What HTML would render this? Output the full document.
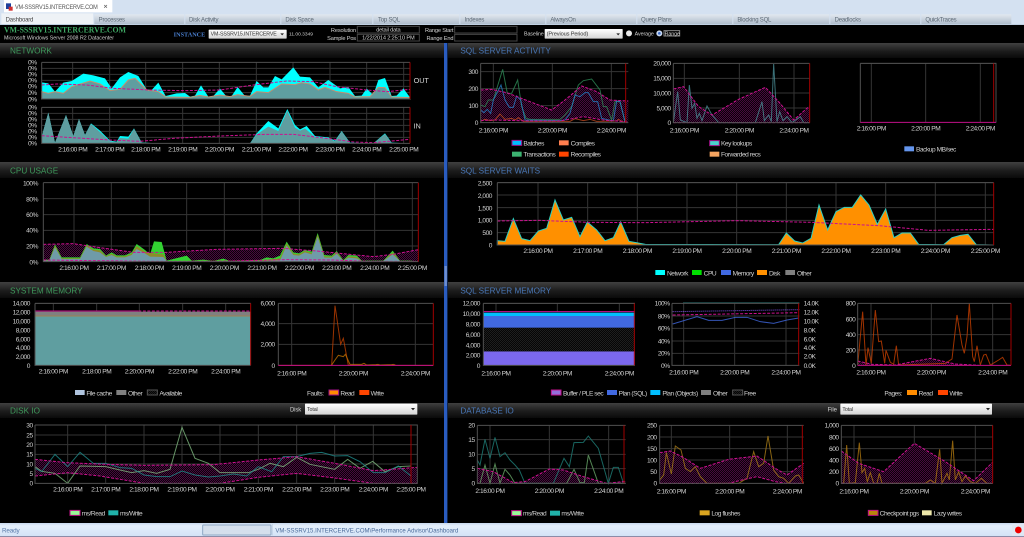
<!DOCTYPE html>
<html><head><meta charset="utf-8"><title>Performance Advisor Dashboard</title>
<style>
html,body{margin:0;padding:0;background:#000;width:1024px;height:537px;overflow:hidden}
svg{display:block;filter:blur(.35px)}
svg *{vector-effect:non-scaling-stroke}
text{font-family:"Liberation Sans",sans-serif;font-size:19.8px;letter-spacing:-1.35px;fill:#d2d2d2}
.e{text-anchor:end}.m{text-anchor:middle}
.title{font-size:24.6px;letter-spacing:0}
.gr{fill:#3f9a5c}.bl{fill:#4a78b8}
.tab{font-size:18px;letter-spacing:-.6px;fill:#5c6874}
.dk{fill:#333;font-size:16px;letter-spacing:-.4px}
.g{stroke:#343434;stroke-width:1;fill:none}
.f{stroke:#505050;stroke-width:1;fill:none}
.r{stroke:#a00000;stroke-width:1;fill:none}
.d{stroke:#cc1090;stroke-width:1;stroke-dasharray:3 1.5;fill:none}
.band{fill:url(#h);stroke:none}
.l{fill:none;stroke-width:1;opacity:.8}
</style></head><body>
<svg width="1024" height="537" viewBox="0 0 1024 537" xmlns="http://www.w3.org/2000/svg">
<defs>
<pattern id="h" width="6" height="6" patternUnits="userSpaceOnUse"><rect width="6" height="6" fill="#0a0108"/><rect width="3" height="3" fill="#480a3e"/><rect x="3" y="3" width="3" height="3" fill="#480a3e"/></pattern>
<pattern id="k" width="6" height="6" patternUnits="userSpaceOnUse"><rect width="6" height="6" fill="#050505"/><rect width="3" height="3" fill="#1e1e1e"/><rect x="3" y="3" width="3" height="3" fill="#1e1e1e"/></pattern>
<linearGradient id="hd" x1="0" y1="0" x2="0" y2="1"><stop offset="0" stop-color="#404040"/><stop offset=".55" stop-color="#1c1c1c"/><stop offset="1" stop-color="#0a0a0a"/></linearGradient>
<linearGradient id="tb" x1="0" y1="0" x2="0" y2="1"><stop offset="0" stop-color="#e2e8ef"/><stop offset="1" stop-color="#aebccb"/></linearGradient>
<linearGradient id="sel" x1="0" y1="0" x2="0" y2="1"><stop offset="0" stop-color="#fff"/><stop offset="1" stop-color="#d4d4d4"/></linearGradient>
<linearGradient id="st" x1="0" y1="0" x2="0" y2="1"><stop offset="0" stop-color="#c8d8ec"/><stop offset=".2" stop-color="#e4effb"/><stop offset="1" stop-color="#d2e2f6"/></linearGradient>
</defs>

<rect width="1024" height="537" fill="#000"/>
<rect width="1024" height="25" fill="#d4e1f1"/>
<rect x="0" y="523" width="1024" height="14" fill="url(#st)"/>
<rect x="0" y="536" width="1024" height="1" fill="#8c8ca8"/>

<!-- section headers -->
<rect x="0" y="43" width="444" height="15" fill="url(#hd)"/>
<rect x="448" y="43" width="576" height="15" fill="url(#hd)"/>
<rect x="0" y="162" width="444" height="16" fill="url(#hd)"/>
<rect x="448" y="162" width="576" height="16" fill="url(#hd)"/>
<rect x="0" y="282" width="444" height="16" fill="url(#hd)"/>
<rect x="448" y="282" width="576" height="16" fill="url(#hd)"/>
<rect x="0" y="403" width="444" height="15" fill="url(#hd)"/>
<rect x="448" y="403" width="576" height="15" fill="url(#hd)"/>
<rect x="444" y="43" width="3.4" height="480" fill="#2a5cc0"/>
<rect x="444.5" y="266" width="2.4" height="20" fill="#6f8fd0"/>

<!-- ZOOM 1 -->
<g transform="scale(.33333)">
<rect x="12" y="0" width="325" height="37" fill="#fff"/>
<rect x="18" y="10" width="15" height="17" fill="#1c3f9c"/><rect x="26" y="20" width="12" height="12" fill="#d03030"/>
<text x="45" y="27" class="tab" textLength="248" lengthAdjust="spacingAndGlyphs" style="fill:#555">VM-SSSRV15.INTERCERVE.COM</text>
<text x="311" y="26" style="font-size:20px;fill:#666;font-weight:bold">×</text>
<rect x="4" y="40" width="276" height="33" fill="#eef2f6"/>
<rect x="283" y="43" width="270" height="30" fill="url(#tb)"/>
<rect x="556" y="43" width="285" height="30" fill="url(#tb)"/>
<rect x="844" y="43" width="273" height="30" fill="url(#tb)"/>
<rect x="1120" y="43" width="258" height="30" fill="url(#tb)"/>
<rect x="1381" y="43" width="255" height="30" fill="url(#tb)"/>
<rect x="1639" y="43" width="270" height="30" fill="url(#tb)"/>
<rect x="1912" y="43" width="285" height="30" fill="url(#tb)"/>
<rect x="2200" y="43" width="288" height="30" fill="url(#tb)"/>
<rect x="2491" y="43" width="270" height="30" fill="url(#tb)"/>
<rect x="2764" y="43" width="270" height="30" fill="url(#tb)"/>
<rect x="0" y="72" width="3072" height="3" fill="#c0d0e2"/>
<text x="17" y="64" class="tab" style="fill:#444">Dashboard</text>
<text x="296" y="65" class="tab">Processes</text>
<text x="567" y="65" class="tab">Disk Activity</text>
<text x="856" y="65" class="tab">Disk Space</text>
<text x="1134" y="65" class="tab">Top SQL</text>
<text x="1394" y="65" class="tab">Indexes</text>
<text x="1651" y="65" class="tab">AlwaysOn</text>
<text x="1923" y="65" class="tab">Query Plans</text>
<text x="2212" y="65" class="tab">Blocking SQL</text>
<text x="2504" y="65" class="tab">Deadlocks</text>
<text x="2776" y="65" class="tab">QuickTraces</text>

<text x="12" y="97" textLength="366" lengthAdjust="spacingAndGlyphs" style="font-family:'Liberation Serif',serif;font-weight:bold;font-size:25px;letter-spacing:0;fill:#3fa864">VM-SSSRV15.INTERCERVE.COM</text>
<text x="12" y="119" textLength="330" lengthAdjust="spacingAndGlyphs" style="font-size:17px;letter-spacing:0">Microsoft Windows Server 2008 R2 Datacenter</text>
<text x="521" y="110" textLength="95" lengthAdjust="spacingAndGlyphs" style="font-family:'Liberation Serif',serif;font-weight:bold;font-size:20px;letter-spacing:0;fill:#4a7fcf">INSTANCE</text>
<rect x="626" y="89" width="234" height="27" rx="2" fill="url(#sel)"/>
<text x="632" y="107" class="dk" textLength="198" lengthAdjust="spacingAndGlyphs">VM-SSSRV15.INTERCERVE</text>
<path d="M841 100h11l-5.500 6z" fill="#222"/>
<text x="867" y="107" textLength="72" lengthAdjust="spacingAndGlyphs" style="font-size:15px;letter-spacing:0">11.00.3349</text>
<text x="1068" y="96" class="e" style="font-size:17px;letter-spacing:-.5px">Resolution</text>
<text x="1068" y="120" class="e" style="font-size:17px;letter-spacing:-.5px">Sample Pos</text>
<rect x="1072" y="79" width="186" height="20" fill="none" stroke="#444"/>
<rect x="1072" y="103" width="186" height="20" fill="none" stroke="#444"/>
<text x="1165" y="95" class="m" style="font-size:17px;letter-spacing:-.5px">detail data</text>
<text x="1165" y="119" class="m" style="font-size:17px;letter-spacing:-.5px">1/22/2014 2:25:10 PM</text>
<text x="1360" y="96" class="e" style="font-size:17px;letter-spacing:-.5px">Range Start</text>
<text x="1360" y="120" class="e" style="font-size:17px;letter-spacing:-.5px">Range End</text>
<rect x="1364" y="79" width="187" height="20" fill="none" stroke="#444"/>
<rect x="1364" y="103" width="187" height="20" fill="none" stroke="#444"/>

<text x="30" y="161" class="title gr">NETWORK</text>
<text x="30" y="521" class="title gr">CPU USAGE</text>
<text x="30" y="881" class="title gr">SYSTEM MEMORY</text>
<text x="30" y="1241" class="title gr">DISK IO</text>
<text x="1381" y="161" class="title bl">SQL SERVER ACTIVITY</text>
<text x="1381" y="521" class="title bl">SQL SERVER WAITS</text>
<text x="1381" y="881" class="title bl">SQL SERVER MEMORY</text>
<text x="1381" y="1241" class="title bl">DATABASE IO</text>

<!-- Network OUT -->
<path class="g" d="M125 205H1230M125 223H1230M125 241H1230M125 259H1230M125 278H1230M218 187V297M329 187V297M437 187V297M548 187V297M658 187V297M769 187V297M879 187V297M990 187V297M1100 187V297M1211 187V297"/>
<path fill="#00ffff" d="M125 297V247L145 250 165 275 190 248 215 243 250 221 280 226 315 235 335 265 360 232 385 216 415 228 440 268 455 270 475 248 497 288 530 280 555 279 570 290 585 287 603 256 625 290 640 288 660 266 680 290 695 288 713 261 735 288 750 287 770 243 790 262 805 262 825 228 845 238 880 202 900 230 930 232 955 262 985 240 1020 265 1045 261 1065 288 1085 287 1100 266 1120 285 1135 240 1155 234 1175 288 1190 287 1210 265 1230 292V297Z"/>
<path fill="#5f9ea0" stroke="#c09070" d="M125 297V275L145 280 165 275 190 280 215 260 270 243 300 252 330 272 360 268 385 240 405 235 440 270 475 275 497 291 570 292 600 286 625 291 660 285 690 290 713 284 750 289 770 275 805 278 845 252 885 254 905 248 930 252 955 270 975 262 1010 275 1045 280 1065 291 1110 290 1135 262 1155 263 1175 291 1230 293V297Z"/>
<path class="d" d="M125 255 170 252 260 255 340 265 450 270 550 272 660 270 760 255 860 243 940 245 1010 260 1100 270 1160 275 1230 268"/>
<path class="f" d="M125 187H1230M125 187V297H1230"/><path class="r" d="M1230 187V297"/>
<g class="e">
<text x="110" y="194" class="e">0%</text><text x="110" y="212" class="e">0%</text><text x="110" y="230" class="e">0%</text><text x="110" y="248" class="e">0%</text><text x="110" y="266" class="e">0%</text><text x="110" y="285" class="e">0%</text><text x="110" y="304" class="e">0%</text>
<text x="110" y="329" class="e">0%</text><text x="110" y="347" class="e">0%</text><text x="110" y="365" class="e">0%</text><text x="110" y="383" class="e">0%</text><text x="110" y="401" class="e">0%</text><text x="110" y="419" class="e">0%</text><text x="110" y="437" class="e">0%</text>
</g>
<text x="1241" y="249" style="font-size:22px;letter-spacing:-.5px">OUT</text>
<text x="1241" y="385" style="font-size:22px;letter-spacing:-.5px">IN</text>

<!-- Network IN -->
<path class="g" d="M125 340H1230M125 358H1230M125 376H1230M125 394H1230M125 412H1230M218 322V430M329 322V430M437 322V430M548 322V430M658 322V430M769 322V430M879 322V430M990 322V430M1100 322V430M1211 322V430"/>
<path fill="#00ffff" d="M125 430V410L145 338 165 428 198 345 220 408 237 357 255 405 273 370 300 392 330 422 350 425 360 408 385 410 402 385 425 427 470 430 750 430 770 400 805 363 835 385 862 327 885 375 900 388 920 378 945 408 985 412 1005 422 1025 393 1050 428 1120 430 1155 400 1175 428 1230 430Z"/>
<path fill="#5f9ea0" d="M125 430V410L145 338 165 428 198 345 220 408 237 357 255 405 273 372 300 396 330 424 350 426 360 414 385 416 402 386 425 428 470 430 750 430 770 403 805 380 835 393 862 332 885 383 900 392 915 385 945 411 985 414 1005 424 1025 394 1050 429 1120 430 1155 402 1175 429 1230 430Z"/>
<path class="d" d="M125 407 170 410 250 415 330 420 420 424 520 415 660 408 800 403 880 403 980 415 1060 426 1120 428 1230 418"/>
<path class="f" d="M125 322H1230M125 322V430H1230"/><path class="r" d="M1230 322V430"/>
<text x="218" y="454" class="m">2:16:00 PM</text><text x="329" y="454" class="m">2:17:00 PM</text><text x="437" y="454" class="m">2:18:00 PM</text><text x="548" y="454" class="m">2:19:00 PM</text><text x="658" y="454" class="m">2:20:00 PM</text><text x="769" y="454" class="m">2:21:00 PM</text><text x="879" y="454" class="m">2:22:00 PM</text><text x="990" y="454" class="m">2:23:00 PM</text><text x="1100" y="454" class="m">2:24:00 PM</text><text x="1211" y="454" class="m">2:25:00 PM</text>
</g>

<!-- ZOOM 2: top right -->
<g transform="translate(512,0) scale(.33333)">
<text x="36" y="106" style="font-size:16px;letter-spacing:-.3px">Baseline</text>
<rect x="98" y="87" width="234" height="29" rx="2" fill="url(#sel)"/>
<text x="104" y="107" class="dk" style="font-size:17px">(Previous Period)</text>
<path d="M313 100h11l-5.500 6z" fill="#222"/>
<circle cx="351" cy="100" r="9" fill="#e8e8e8"/>
<text x="368" y="106" style="font-size:16px;letter-spacing:-.3px">Average</text>
<circle cx="442" cy="100" r="9" fill="#c8d8f0"/><circle cx="442" cy="100" r="4" fill="#3a6ac8"/>
<rect x="456" y="92" width="47" height="16" fill="none" stroke="#888"/>
<text x="458" y="106" style="font-size:16px;letter-spacing:-.3px">Range</text>

<!-- Chart 2 activity -->
<path class="g" d="M484 235H893M484 279H893M484 324H893M517 190V368M682 190V368M846 190V368"/>
<path class="band" d="M484 267 515 260 560 320 600 345 680 298 760 262 800 305 845 360 893 318V368H484Z"/>
<path class="l" stroke="#4a8e96" d="M484 368 497 275 505 360 525 368 532 255 540 325 548 310 555 355 562 340 570 362 585 318 600 345 620 368 730 368 750 305 757 362 770 345 778 365 785 192 795 365 803 335 813 362 825 350 840 368 865 350 875 368 893 368"/>
<path class="d" d="M484 267 515 260 560 320 600 345 680 298 760 262 800 305 845 360 893 318"/>
<path class="d" d="M484 368H893"/>
<path class="f" d="M484 190H893M484 190V368H893"/><path class="r" d="M893 190V368"/>
<text x="476" y="197" class="e">20,000</text><text x="476" y="242" class="e">15,000</text><text x="476" y="286" class="e">10,000</text><text x="476" y="331" class="e">5,000</text><text x="476" y="375" class="e">0</text>
<text x="517" y="398" class="m">2:16:00 PM</text><text x="682" y="398" class="m">2:20:00 PM</text><text x="846" y="398" class="m">2:24:00 PM</text>
<rect x="593" y="422" width="29" height="15" fill="#48d1cc" stroke="#a01088"/><text x="627" y="437">Key lookups</text>
<rect x="593" y="455" width="29" height="15" fill="#f4a460"/><text x="627" y="470">Forwarded recs</text>

<!-- Chart 3 activity -->
<path class="g" d="M1045 190H1452M1078 190V368M1241 190V368M1405 190V368"/>
<path class="f" d="M1045 190H1452V368M1045 190V368"/>
<path class="r" d="M1445 190V368"/>
<path stroke="#c01088" fill="none" d="M1045 367H1452"/>
<text x="1078" y="392" class="m">2:16:00 PM</text><text x="1241" y="392" class="m">2:20:00 PM</text><text x="1405" y="392" class="m">2:24:00 PM</text>
<rect x="1177" y="439" width="29" height="15" fill="#6495ed"/><text x="1212" y="454">Backup MB/sec</text>
</g>

<!-- Activity chart 1 -->
<g transform="translate(450,50) scale(.33333)">
<path class="g" d="M92 65H535M92 116H535M92 167H535M130 40V218M307 40V218M484 40V218"/>
<path class="band" d="M92 120 125 118 170 128 240 155 305 180 345 150 395 108 440 125 480 150 535 153V216L460 210 400 200 330 213 240 213 130 210 92 212Z"/>
<path class="l" stroke="#2e8b57" d="M92 165 105 170 115 150 130 150 158 58 172 130 185 130 203 90 215 170 228 205 240 208 330 208 345 195 365 170 385 105 400 92 425 87 450 120 460 170 470 170 485 210 495 155 510 155 525 215"/>
<path class="l" stroke="#2480c8" d="M92 180 102 188 112 178 122 190 130 150 153 105 165 150 178 172 190 172 200 138 212 150 225 210 330 212 345 210 360 190 375 135 390 140 405 128 415 128 430 155 443 155 455 205 490 213 500 153 510 155 525 215"/>
<path class="l" stroke="#c04a20" d="M92 214 105 208 120 212 135 210 150 192 165 208 185 205 195 210 205 203 220 214 360 214 375 206 400 212 420 208 440 214 500 213 505 208 520 216"/>
<path class="d" d="M92 120 125 118 170 128 240 155 305 180 345 150 395 108 440 125 480 150 535 153"/>
<path class="d" d="M92 212 130 210 240 213 330 213 400 200 460 210 535 216"/>
<path class="f" d="M92 40H535M92 40V218H535"/><path class="r" d="M527 40V218"/>
<text x="84" y="72" class="e">300</text><text x="84" y="123" class="e">200</text><text x="84" y="174" class="e">100</text><text x="84" y="225" class="e">0</text>
<text x="130" y="248" class="m">2:16:00 PM</text><text x="307" y="248" class="m">2:20:00 PM</text><text x="484" y="248" class="m">2:24:00 PM</text>
<rect x="186" y="271" width="29" height="15" fill="#00bfff" stroke="#a01088"/><text x="220" y="287">Batches</text>
<rect x="327" y="271" width="29" height="15" fill="#ff7f50"/><text x="362" y="287">Compiles</text>
<rect x="186" y="305" width="29" height="15" fill="#3cb371"/><text x="220" y="319">Transactions</text>
<rect x="327" y="305" width="29" height="15" fill="#ff4500"/><text x="362" y="319">Recompiles</text>
</g>

<!-- CPU -->
<g transform="translate(0,165) scale(.33333)">
<path class="g" d="M130 101H1255M130 149H1255M130 196H1255M130 243H1255M222 53V290M334 53V290M448 53V290M560 53V290M673 53V290M786 53V290M898 53V290M1010 53V290M1124 53V290M1237 53V290"/>
<path class="band" d="M130 238 220 236 300 248 400 262 500 262 650 253 850 250 950 258 1050 268 1120 275 1180 268 1255 254V290H130Z"/>
<path fill="#32d232" d="M130 290V284L148 284 165 238 185 277 240 277 260 237 280 250 300 252 318 272 335 262 350 271 375 271 395 262 410 237 435 255 450 268 462 229 485 231 500 287 520 282 560 272 575 287 610 284 640 288 670 281 690 288 780 285 800 277 820 280 840 272 860 230 880 262 897 265 915 255 935 260 953 204 973 270 995 272 1010 258 1030 285 1045 270 1070 272 1085 287 1150 287 1178 257 1200 287 1230 287 1255 289V290Z"/>
<path fill="#8c8c28" d="M130 290V286L148 286 165 242 185 280 240 280 260 241 280 254 300 256 318 274 335 266 350 274 375 274 395 266 410 243 435 260 450 264 490 268 500 288 780 287 840 280 860 235 880 266 897 268 915 258 935 264 953 209 973 274 995 275 1010 262 1030 287 1045 274 1070 276 1085 288 1150 288 1178 262 1200 288 1255 290Z"/>
<path fill="#6f9ba8" d="M130 290V287L148 287 165 247 185 282 240 282 260 245 280 258 300 262 318 276 335 270 350 277 375 277 395 270 410 252 435 265 450 275 490 276 500 288 780 288 840 286 860 242 880 270 897 272 915 262 935 268 953 216 973 278 995 278 1010 266 1030 288 1045 278 1070 280 1085 288 1150 288 1178 268 1200 288 1255 290Z"/>
<path class="d" d="M130 238 220 236 300 248 400 262 500 262 650 253 850 250 950 258 1050 268 1120 275 1180 268 1255 254"/>
<path class="d" d="M130 285 450 289 650 289 860 284 1000 285 1100 289 1255 289"/>
<path class="f" d="M130 53H1255M130 53V290H1255"/><path class="r" d="M1255 53V290"/>
<text x="114" y="62" class="e">100%</text><text x="114" y="109" class="e">80%</text><text x="114" y="156" class="e">60%</text><text x="114" y="203" class="e">40%</text><text x="114" y="250" class="e">20%</text><text x="114" y="298" class="e">0%</text>
<text x="222" y="315" class="m">2:16:00 PM</text><text x="334" y="315" class="m">2:17:00 PM</text><text x="448" y="315" class="m">2:18:00 PM</text><text x="560" y="315" class="m">2:19:00 PM</text><text x="673" y="315" class="m">2:20:00 PM</text><text x="786" y="315" class="m">2:21:00 PM</text><text x="898" y="315" class="m">2:22:00 PM</text><text x="1010" y="315" class="m">2:23:00 PM</text><text x="1124" y="315" class="m">2:24:00 PM</text><text x="1237" y="315" class="m">2:25:00 PM</text>
</g>

<!-- WAITS -->
<g transform="translate(512,165) scale(.33333)">
<path class="g" d="M-44 53H1445M-44 90H1445M-44 128H1445M-44 166H1445M-44 203H1445M78 53V240M227 53V240M376 53V240M525 53V240M674 53V240M823 53V240M972 53V240M1121 53V240M1270 53V240M1420 53V240"/>
<path fill="#ff9000" stroke="#30d0c0" d="M-44 240V227L-21 229 4 161 29 221 54 227 79 198 104 190 129 105 154 165 179 157 204 215 226 171 254 195 279 227 304 218 326 171 351 229 400 238 800 239 823 204 848 228 872 234 897 220 921 120 947 195 972 140 997 127 1021 127 1046 90 1071 120 1096 178 1121 132 1146 218 1170 204 1195 204 1220 238 1295 239 1320 218 1345 211 1368 208 1393 239 1445 240Z"/>
<path class="d" d="M-44 168 80 166 230 172 400 173 675 167 900 172 1100 182 1250 196 1445 193"/>
<path class="f" d="M-44 53H1445M-44 53V240H1445"/><path class="r" d="M1445 53V240"/>
<text x="-60" y="62" class="e">2,500</text><text x="-60" y="99" class="e">2,000</text><text x="-60" y="136" class="e">1,500</text><text x="-60" y="173" class="e">1,000</text><text x="-60" y="210" class="e">500</text><text x="-60" y="248" class="e">0</text>
<text x="78" y="264" class="m">2:16:00 PM</text><text x="227" y="264" class="m">2:17:00 PM</text><text x="376" y="264" class="m">2:18:00 PM</text><text x="525" y="264" class="m">2:19:00 PM</text><text x="674" y="264" class="m">2:20:00 PM</text><text x="823" y="264" class="m">2:21:00 PM</text><text x="972" y="264" class="m">2:22:00 PM</text><text x="1121" y="264" class="m">2:23:00 PM</text><text x="1270" y="264" class="m">2:24:00 PM</text><text x="1420" y="264" class="m">2:25:00 PM</text>
<rect x="430" y="315" width="29" height="15" fill="#00ffff"/><text x="465" y="331">Network</text>
<rect x="540" y="315" width="29" height="15" fill="#00e000"/><text x="575" y="331">CPU</text>
<rect x="627" y="315" width="30" height="15" fill="#4169e1"/><text x="662" y="331">Memory</text>
<rect x="735" y="315" width="30" height="15" fill="#ff9000"/><text x="771" y="331">Disk</text>
<rect x="820" y="315" width="29" height="15" fill="#808080"/><text x="855" y="331">Other</text>
</g>

<!-- SYSTEM MEMORY -->
<g transform="translate(0,285) scale(.33333)">
<path class="g" d="M105 55H752M160 55V78M290 55V78M418 55V78M548 55V78M677 55V78"/>
<rect x="105" y="80" width="647" height="13" fill="#808080"/>
<rect x="105" y="93" width="647" height="148" fill="#5f9ea0"/>
<path stroke="#a08050" fill="none" d="M105 93H752"/>
<path stroke="#cc1090" fill="none" d="M105 78H415"/>
<path class="d" d="M415 78H752"/>
<path class="f" d="M105 55H752M105 55V241H752"/><path class="r" d="M752 55V241"/>
<text x="90" y="62" class="e">14,000</text><text x="90" y="89" class="e">12,000</text><text x="90" y="115" class="e">10,000</text><text x="90" y="142" class="e">8,000</text><text x="90" y="169" class="e">6,000</text><text x="90" y="195" class="e">4,000</text><text x="90" y="222" class="e">2,000</text><text x="90" y="249" class="e">0</text>
<text x="160" y="266" class="m">2:16:00 PM</text><text x="290" y="266" class="m">2:18:00 PM</text><text x="418" y="266" class="m">2:20:00 PM</text><text x="548" y="266" class="m">2:22:00 PM</text><text x="677" y="266" class="m">2:24:00 PM</text>
<rect x="225" y="315" width="29" height="15" fill="#b0c4de"/><text x="259" y="331">File cache</text>
<rect x="349" y="315" width="30" height="15" fill="#808080"/><text x="384" y="331">Other</text>
<rect x="442" y="315" width="30" height="15" fill="url(#k)" stroke="#555"/><text x="478" y="331">Available</text>

<path class="g" d="M835 116H1300M835 178H1300M875 55V241M1060 55V241M1246 55V241"/>
<path class="l" stroke="#c04000" d="M835 241H995L1005 62 1022 178 1030 160 1045 241H1300"/>
<path class="l" stroke="#c07000" d="M995 240 1005 225 1015 211 1030 215 1036 208 1050 238 1085 238 1092 235 1100 240 1128 239 1134 238 1140 240 1175 239 1180 238 1186 240"/>
<path class="f" d="M835 55H1300M835 55V241"/>
<path stroke="#c01088" fill="none" d="M835 241H1300"/>
<path class="r" d="M1300 55V241"/>
<text x="824" y="62" class="e">6,000</text><text x="824" y="123" class="e">4,000</text><text x="824" y="185" class="e">2,000</text><text x="824" y="249" class="e">0</text>
<text x="875" y="272" class="m">2:16:00 PM</text><text x="1060" y="272" class="m">2:20:00 PM</text><text x="1246" y="272" class="m">2:24:00 PM</text>
<text x="921" y="331">Faults:</text>
<rect x="987" y="315" width="29" height="15" fill="#ff8c00" stroke="#a01088"/><text x="1021" y="331">Read</text>
<rect x="1078" y="315" width="30" height="15" fill="#ff4500"/><text x="1112" y="331">Write</text>
</g>

<!-- SQL MEMORY -->
<g transform="translate(450,290) scale(.33333)">
<path class="g" d="M100 40H555M138 40V65M322 40V65M508 40V65"/>
<rect x="100" y="184" width="455" height="42" fill="#7b68ee"/>
<rect x="100" y="113" width="455" height="71" fill="url(#k)"/>
<rect x="100" y="78" width="455" height="35" fill="#4169e1"/>
<rect x="100" y="68" width="455" height="10" fill="#00bfff"/>
<path stroke="#cc1090" fill="none" d="M100 65H555"/>
<path class="f" d="M100 40H555M100 40V226H555"/><path class="r" d="M553 40V226"/>
<text x="90" y="47" class="e">12,000</text><text x="90" y="78" class="e">10,000</text><text x="90" y="109" class="e">8,000</text><text x="90" y="141" class="e">6,000</text><text x="90" y="172" class="e">4,000</text><text x="90" y="203" class="e">2,000</text><text x="90" y="234" class="e">0</text>
<text x="138" y="256" class="m">2:16:00 PM</text><text x="322" y="256" class="m">2:20:00 PM</text><text x="508" y="256" class="m">2:24:00 PM</text>
</g>
<g transform="translate(512,285) scale(.33333)">
<path class="g" d="M480 93H862M480 130H862M480 168H862M480 205H862M515 55V241M668 55V241M822 55V241"/>
<path stroke="#2a8a8a" fill="none" stroke-width="1" d="M513 54H862"/>
<path class="l" stroke="#4169e1" d="M482 117 555 95 590 106 630 106 670 97 705 97 745 110 785 115 825 105 860 99"/>
<path stroke="#7b50e0" fill="none" stroke-dasharray="1 1" d="M482 80 862 74"/>
<path class="d" d="M482 90 860 83"/>
<path class="f" d="M480 55H862M480 55V241H862"/><path class="r" d="M860 55V241"/>
<text x="473" y="62" class="e">100%</text><text x="473" y="100" class="e">80%</text><text x="473" y="137" class="e">60%</text><text x="473" y="175" class="e">40%</text><text x="473" y="212" class="e">20%</text><text x="473" y="249" class="e">0%</text>
<text x="875" y="62">14.0K</text><text x="875" y="89">12.0K</text><text x="875" y="115">10.0K</text><text x="875" y="142">8.0K</text><text x="875" y="169">6.0K</text><text x="875" y="195">4.0K</text><text x="875" y="221">2.0K</text><text x="875" y="249">0.0K</text>
<text x="515" y="269" class="m">2:16:00 PM</text><text x="668" y="269" class="m">2:20:00 PM</text><text x="822" y="269" class="m">2:24:00 PM</text>

<path class="g" d="M1037 102H1497M1037 149H1497M1037 195H1497M1077 55V241M1258 55V241M1442 55V241"/>
<path class="band" d="M1037 228 1080 238 1150 240 1255 220 1330 237 1400 241H1037Z"/>
<path class="l" stroke="#c84000" d="M1037 241 1052 80 1062 241 1068 188 1078 235 1090 75 1100 170 1108 168 1118 235 1122 196 1135 232 1145 238 1153 182 1160 240 1300 235 1320 222 1335 90 1350 180 1357 205 1365 155 1372 55 1382 215 1387 230 1395 182 1405 240 1415 210 1422 208 1435 240 1460 225 1472 217 1485 240 1497 241"/>
<path class="d" d="M1037 228 1080 238 1150 240 1255 220 1330 237 1400 241"/>
<path class="f" d="M1037 55H1497M1037 55V241"/><path stroke="#c01088" fill="none" d="M1037 241H1497"/><path class="r" d="M1497 55V241"/>
<text x="1030" y="62" class="e">800</text><text x="1030" y="109" class="e">600</text><text x="1030" y="156" class="e">400</text><text x="1030" y="202" class="e">200</text><text x="1030" y="249" class="e">0</text>
<text x="1077" y="269" class="m">2:16:00 PM</text><text x="1258" y="269" class="m">2:20:00 PM</text><text x="1442" y="269" class="m">2:24:00 PM</text>

<rect x="118" y="315" width="29" height="15" fill="#9370db" stroke="#c01088"/><text x="153" y="331">Buffer / PLE sec</text>
<rect x="285" y="315" width="30" height="15" fill="#4169e1"/><text x="320" y="331">Plan (SQL)</text>
<rect x="415" y="315" width="30" height="15" fill="#00bfff"/><text x="451" y="331">Plan (Objects)</text>
<rect x="567" y="315" width="30" height="15" fill="#808080"/><text x="603" y="331">Other</text>
<rect x="662" y="315" width="30" height="15" fill="url(#k)" stroke="#555"/><text x="696" y="331">Free</text>
<text x="1117" y="331">Pages:</text>
<rect x="1185" y="315" width="30" height="15" fill="#ff8c00"/><text x="1220" y="331">Read</text>
<rect x="1278" y="315" width="30" height="15" fill="#ff4500"/><text x="1312" y="331">Write</text>
</g>

<!-- DISK IO -->
<g transform="translate(0,400) scale(.33333)">
<text x="870" y="34" style="font-size:18px;letter-spacing:-.4px">Disk</text>
<rect x="915" y="11" width="337" height="33" rx="2" fill="url(#sel)"/>
<text x="921" y="33" class="dk">Total</text>
<path d="M1233 24h12l-6 7z" fill="#222"/>

<path class="g" d="M105 105H1252M105 134H1252M105 163H1252M105 192H1252M105 221H1252M203 75V250M317 75V250M432 75V250M546 75V250M660 75V250M775 75V250M890 75V250M1004 75V250M1120 75V250M1233 75V250"/>
<path class="band" d="M105 178 200 188 320 193 432 196 640 194 775 180 890 170 1004 190 1120 212 1252 202V250H1120L1004 234 890 220 775 232 660 250H432L300 228 203 218 105 228Z"/>
<path class="l" stroke="#7fb87f" d="M105 200 125 214 165 220 203 250 240 198 317 200 360 210 395 218 432 212 470 220 510 208 546 82 585 175 625 190 660 218 745 218 775 208 810 190 850 200 890 172 930 193 1004 208 1043 178 1080 205 1118 184 1155 215 1195 200 1233 198"/>
<path class="l" stroke="#1f8c8c" d="M105 205 125 215 165 163 203 200 240 157 280 190 317 190 360 203 395 205 432 225 470 230 510 230 546 213 585 225 625 231 660 228 700 222 740 228 775 200 815 215 850 170 890 170 930 160 965 157 1004 168 1043 167 1080 185 1120 218 1155 218 1195 198 1233 228"/>
<path class="d" d="M105 178 200 188 320 193 432 196 640 194 775 180 890 170 1004 190 1120 212 1252 202"/>
<path class="d" d="M105 228 203 218 300 228 432 250 660 250 775 232 890 220 1004 234 1120 250 1252 250"/>
<path class="f" d="M105 75H1252V250H105V75"/><path class="r" d="M1233 75V250"/>
<text x="98" y="83" class="e">30</text><text x="98" y="112" class="e">25</text><text x="98" y="141" class="e">20</text><text x="98" y="170" class="e">15</text><text x="98" y="199" class="e">10</text><text x="98" y="228" class="e">5</text><text x="98" y="257" class="e">0</text>
<text x="203" y="274" class="m">2:16:00 PM</text><text x="317" y="274" class="m">2:17:00 PM</text><text x="432" y="274" class="m">2:18:00 PM</text><text x="546" y="274" class="m">2:19:00 PM</text><text x="660" y="274" class="m">2:20:00 PM</text><text x="775" y="274" class="m">2:21:00 PM</text><text x="890" y="274" class="m">2:22:00 PM</text><text x="1004" y="274" class="m">2:23:00 PM</text><text x="1120" y="274" class="m">2:24:00 PM</text><text x="1233" y="274" class="m">2:25:00 PM</text>
<rect x="210" y="331" width="30" height="15" fill="#98fb98" stroke="#c01088"/><text x="245" y="346">ms/Read</text>
<rect x="325" y="331" width="30" height="15" fill="#20b2aa"/><text x="360" y="346">ms/Write</text>

<rect x="608" y="375" width="205" height="30" rx="2" fill="#d4dfec" stroke="#8fa8c4" stroke-width="1"/>
<rect x="818" y="372" width="1" height="34" fill="#a0b4cc"/>
<text x="6" y="398" style="font-size:19px;letter-spacing:-.5px;fill:#5878a8">Ready</text>
<text x="826" y="398" textLength="549" lengthAdjust="spacingAndGlyphs" style="font-size:19px;letter-spacing:0;fill:#4a6a9a">VM-SSSRV15.INTERCERVE.COM\Performance Advisor\Dashboard</text>
</g>

<!-- DB IO chart 1 -->
<g transform="translate(450,410) scale(.33333)">
<path class="g" d="M82 89H527M82 133H527M82 176H527M120 46V220M298 46V220M476 46V220"/>
<path class="band" d="M82 175 130 185 190 218 225 215 298 177 340 180 400 200 470 220 527 214V220H82Z"/>
<path class="l" stroke="#6aa86a" d="M82 220 90 220 105 165 120 220 135 162 150 220 165 178 180 195 195 220 350 220 372 178 390 218 403 218 415 135 445 220 527 220"/>
<path class="l" stroke="#1f7f78" d="M82 150 90 165 105 88 120 145 135 82 150 140 165 128 180 150 195 165 208 180 225 220 310 220 342 145 358 170 372 98 400 97 415 78 445 115 475 220 490 172 505 172 520 218"/>
<path class="d" d="M82 175 130 185 190 218 225 215 298 177 340 180 400 200 470 220 527 214"/>
<path class="f" d="M82 46H527M82 46V220H527"/><path class="r" d="M522 46V220"/>
<text x="74" y="53" class="e">20</text><text x="74" y="96" class="e">15</text><text x="74" y="140" class="e">10</text><text x="74" y="183" class="e">5</text><text x="74" y="227" class="e">0</text>
<text x="120" y="249" class="m">2:16:00 PM</text><text x="298" y="249" class="m">2:20:00 PM</text><text x="476" y="249" class="m">2:24:00 PM</text>
<rect x="185" y="302" width="29" height="15" fill="#98fb98" stroke="#c01088"/><text x="219" y="317">ms/Read</text>
<rect x="300" y="302" width="30" height="15" fill="#20b2aa"/><text x="334" y="317">ms/Write</text>
</g>

<!-- DB IO chart 2,3 -->
<g transform="translate(512,400) scale(.33333)">
<text x="947" y="34" style="font-size:18px;letter-spacing:-.4px">File</text>
<rect x="985" y="11" width="455" height="33" rx="2" fill="url(#sel)"/>
<text x="991" y="33" class="dk">Total</text>
<path d="M1422 24h12l-6 7z" fill="#222"/>

<path class="g" d="M443 111H875M443 146H875M443 180H875M443 215H875M478 76V250M653 76V250M826 76V250"/>
<path class="band" d="M443 158 475 153 510 170 565 205 650 178 735 168 790 205 825 225 875 190V250H820L790 245 735 230 690 240 650 250H443Z"/>
<path class="l" stroke="#a87c18" d="M443 240 455 225 463 158 478 222 490 138 507 150 520 205 535 215 550 200 565 230 585 250 680 250 705 235 725 155 740 200 755 190 768 108 785 210 800 230 815 235 830 250 850 228 860 225 875 250"/>
<path class="d" d="M443 158 475 153 510 170 565 205 650 178 735 168 790 205 825 225 875 190"/>
<path class="d" d="M443 250 650 250 690 240 735 230 790 245 820 250 875 250"/>
<path class="f" d="M443 76H875M443 76V250H875"/><path class="r" d="M871 76V250"/>
<text x="434" y="83" class="e">250</text><text x="434" y="118" class="e">200</text><text x="434" y="153" class="e">150</text><text x="434" y="187" class="e">100</text><text x="434" y="222" class="e">50</text><text x="434" y="257" class="e">0</text>
<text x="478" y="280" class="m">2:16:00 PM</text><text x="653" y="280" class="m">2:20:00 PM</text><text x="826" y="280" class="m">2:24:00 PM</text>
<rect x="563" y="331" width="30" height="15" fill="#daa520"/><text x="598" y="346">Log flushes</text>

<path class="g" d="M988 111H1442M988 146H1442M988 180H1442M988 215H1442M1026 76V250M1207 76V250M1390 76V250"/>
<path class="band" d="M988 153 1040 190 1115 215 1207 130 1300 185 1385 242 1442 187V250H988Z"/>
<path class="l" stroke="#b07810" d="M988 250 995 250 1004 135 1012 250 1030 248 1042 128 1050 218 1058 205 1066 245 1075 218 1085 250 1095 250 1102 220 1110 250 1240 250 1255 240 1270 250 1283 148 1290 250 1305 220 1312 240 1322 122 1330 240 1340 215 1350 245 1360 228 1375 245 1390 250 1408 235 1425 250 1442 250"/>
<path class="d" d="M988 153 1040 190 1115 215 1207 130 1300 185 1385 242 1442 187"/>
<path class="d" d="M988 250H1442"/>
<path class="f" d="M988 76H1442M988 76V250H1442"/><path class="r" d="M1442 76V250"/>
<text x="980" y="83" class="e">1,000</text><text x="980" y="118" class="e">800</text><text x="980" y="153" class="e">600</text><text x="980" y="187" class="e">400</text><text x="980" y="222" class="e">200</text><text x="980" y="257" class="e">0</text>
<text x="1026" y="280" class="m">2:16:00 PM</text><text x="1207" y="280" class="m">2:20:00 PM</text><text x="1390" y="280" class="m">2:24:00 PM</text>
<rect x="1069" y="331" width="29" height="15" fill="#b8860b" stroke="#c01088"/><text x="1103" y="346">Checkpoint pgs</text>
<rect x="1230" y="331" width="29" height="15" fill="#eee8aa"/><text x="1265" y="346">Lazy writes</text>

<rect x="1500" y="372" width="36" height="35" fill="#dfe8f4"/>
<circle cx="1519" cy="390" r="10" fill="#f00000"/>
</g>
</svg>
</body></html>
